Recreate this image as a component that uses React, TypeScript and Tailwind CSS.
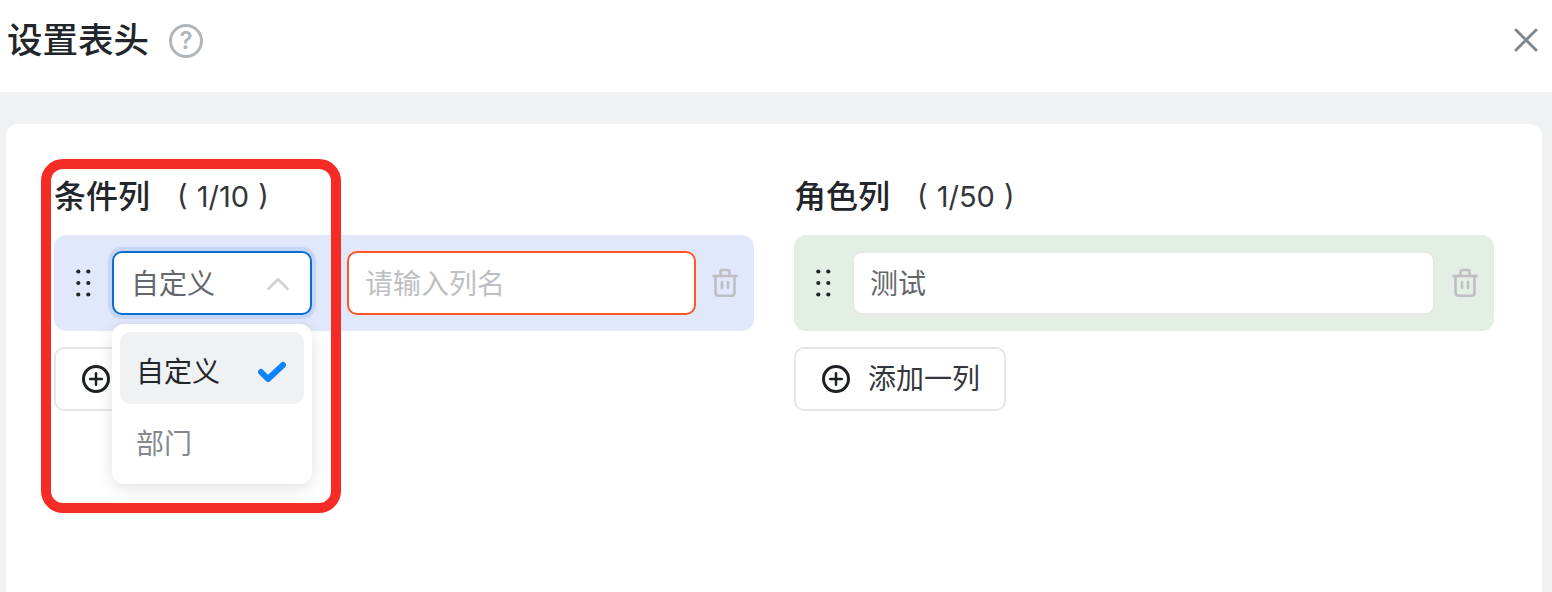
import { ChevronUp, Plus, X } from 'lucide-react';

const cjk = { fontFamily: '"Inter", "Noto Sans CJK SC", sans-serif' };

const Dots = () => (
  <svg width="16" height="28" viewBox="0 0 16 28" className="shrink-0 text-[#22262a]" fill="currentColor">
    <circle cx="2.300" cy="2.500" r="2.100" />
    <circle cx="12.300" cy="2.500" r="2.100" />
    <circle cx="2.300" cy="14" r="2.100" />
    <circle cx="12.300" cy="14" r="2.100" />
    <circle cx="2.300" cy="25.500" r="2.100" />
    <circle cx="12.300" cy="25.500" r="2.100" />
  </svg>
);

const Trash = () => (
  <svg width="26" height="30" viewBox="0 0 26 30" fill="none" stroke="#bdbfc2" strokeWidth="2.6" strokeLinecap="round" strokeLinejoin="round" className="shrink-0">
    <path d="M1.5 8h23" />
    <path d="M8.5 7V3.8C8.5 2.6 9.3 2 10.4 2h5.2c1.100 0 1.900.6 1.900 1.800V7" />
    <path d="M3.500 8v16.500c0 2 1.200 3.200 3.200 3.200h12.600c2 0 3.200-1.200 3.200-3.200V8" />
    <path d="M10 14v6M16 14v6" />
  </svg>
);

const AddButton = () => (
  <button className="mt-4 flex h-16 w-[212px] items-center gap-[18px] rounded-[10px] border-2 border-[#e6e6e6] bg-white pl-[26px] text-[28px] text-[#33373b]">
    <span className="flex h-[28px] w-[28px] items-center justify-center rounded-full border-[3px] border-[#1d2125]">
      <Plus size={20} strokeWidth={3} className="text-[#1d2125]" />
    </span>
    添加一列
  </button>
);

const Heading = ({ title, count }: { title: string; count: string }) => (
  <div className="flex h-[76px] items-start pt-[16px] leading-[44px] text-[#22262a]">
    <span className="text-[32px] font-medium">{title}</span>
    <span className="ml-[27px] text-[29px] whitespace-pre text-[#33373b] [word-spacing:1px]">{`( ${count} )`}</span>
  </div>
);

export default function App() {
  return (
    <div className="relative h-[592px] w-[1552px] overflow-hidden bg-[#f0f1f3]" style={cjk}>
      {/* Header */}
      <div className="flex h-[92px] items-center justify-between bg-white pr-[6px] pl-[7px]">
        <div className="flex items-center gap-[20px] pb-[10px]">
          <span className="text-[35.5px] leading-[48px] font-medium text-[#22262a]">设置表头</span>
          <span className="flex h-[34px] w-[34px] items-center justify-center rounded-full border-[3px] border-[#b1b6bb] text-[24px] font-semibold text-[#b1b6bb]">
            ?
          </span>
        </div>
        <X size={40} strokeWidth={1.8} className="mb-[12px] text-[#7e8890]" />
      </div>

      {/* Card */}
      <div className="mx-[10px] mt-8 ml-[6px] flex h-[500px] gap-10 rounded-t-xl bg-white px-12 pt-[35px]">
        <div className="relative w-[700px]">
          <Heading title="条件列" count="1/10" />
          <div className="flex h-24 items-center rounded-xl bg-[#e2e8fb] pr-[16px] pl-[22px]">
            <Dots />
            <div className="ml-[20px] flex h-[64px] w-[200px] items-center justify-between rounded-[10px] border-2 border-[#0a6fd0] bg-white pt-[1px] pr-[13px] pl-[17px] text-[28px] text-[#64686c] shadow-[0_0_0_4px_#c6d6f4]">
              自定义
              <ChevronUp size={38} strokeWidth={1.8} className="text-[#d0d2d4]" />
            </div>
            <div className="ml-[35px] flex h-[64px] w-[349px] items-center rounded-[10px] border-2 border-[#ff5722] bg-white pt-[1px] pl-[16px] text-[28px] text-[#bdbfc2]">
              请输入列名
            </div>
            <div className="ml-[16px]">
              <Trash />
            </div>
          </div>
          <AddButton />
          {/* Dropdown */}
          <div className="absolute top-[165px] left-[58px] h-[160px] w-[200px] rounded-xl bg-white p-2 shadow-[0_4px_16px_rgba(0,0,0,0.12)]">
            <div className="flex h-[72px] items-center justify-between rounded-[10px] bg-[#f0f1f3] pt-[8px] pr-[17px] pl-[16px] text-[28px] text-[#22262a]">
              自定义
              <svg width="30" height="22" viewBox="0 0 30 22" fill="none" stroke="#0a84ff" strokeWidth="6" strokeLinecap="round" strokeLinejoin="round">
                <path d="M4 11l7 7L26 4" />
              </svg>
            </div>
            <div className="flex h-[72px] items-center pt-[8px] pl-[16px] text-[28px] text-[#85888c]">部门</div>
          </div>
        </div>

        <div className="w-[700px]">
          <Heading title="角色列" count="1/50" />
          <div className="flex h-24 items-center rounded-xl bg-[#e3eee4] pr-[16px] pl-[22px]">
            <Dots />
            <div className="ml-[20px] flex h-[64px] w-[583px] items-center rounded-[10px] border-2 border-[#e6e8e6] bg-white pt-[1px] pl-[16px] text-[28px] text-[#64686c]">
              测试
            </div>
            <div className="ml-[17px]">
              <Trash />
            </div>
          </div>
          <AddButton />
        </div>
      </div>

      {/* Annotation box */}
      <div className="absolute top-[159px] left-[41px] h-[354px] w-[300px] rounded-[22px] border-[10px] border-[#f52c26]" />
    </div>
  );
}
